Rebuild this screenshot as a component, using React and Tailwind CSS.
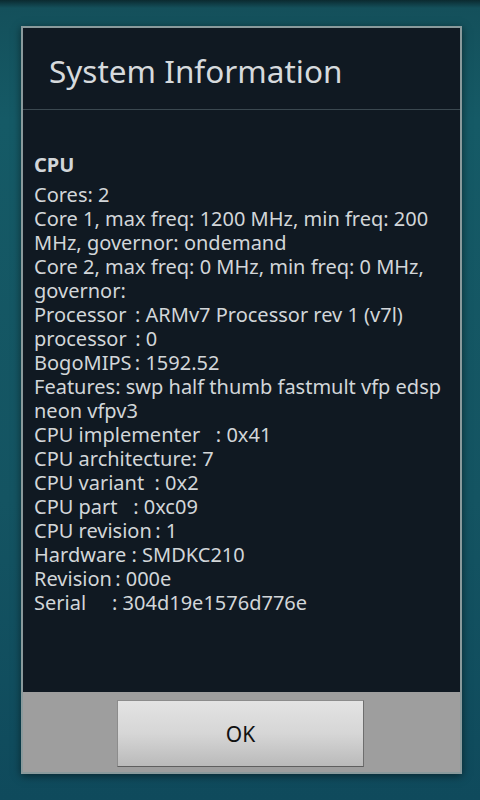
export default function App() {
  const lines = [
    "Cores: 2",
    "Core 1, max freq: 1200 MHz, min freq: 200",
    "MHz, governor: ondemand",
    "Core 2, max freq: 0 MHz, min freq: 0 MHz,",
    "governor:",
    "Processor\u00a0\u2009: ARMv7 Processor rev 1 (v7l)",
    "processor\u00a0\u2009: 0",
    "BogoMIPS\u2009: 1592.52",
    "Features: swp half thumb fastmult vfp edsp",
    "neon vfpv3",
    "CPU implementer\u00a0\u00a0\u00a0: 0x41",
    "CPU architecture: 7",
    "CPU variant\u00a0\u00a0: 0x2",
    "CPU part\u00a0\u00a0\u00a0: 0xc09",
    "CPU revision\u2009: 1",
    "Hardware\u00a0: SMDKC210",
    "Revision\u2009: 000e",
    "Serial\u00a0\u00a0\u00a0\u00a0\u00a0: 304d19e1576d776e",
  ];
  return (
    <div
      className="w-[480px] h-[800px] overflow-hidden pt-[26px] pl-[21px] bg-[linear-gradient(180deg,#0b2a30_0px,#14505b_8px,#155a66_120px,#145462_500px,#0f4a5c_800px)]"
      style={{ fontFamily: '"Noto Sans", "Open Sans", sans-serif' }}
    >
      <div className="w-[441px] h-[748px] border-2 border-[#8a9a9c] flex flex-col bg-[#101922] shadow-[0_2px_8px_rgba(0,0,0,0.5)]">
        <div className="h-[81px] shrink-0 pl-[26px] pt-[23px]">
          <div className="text-[31.5px] leading-[40px] text-[#d6dadd]">System Information</div>
        </div>
        <div className="h-px shrink-0 bg-[#3b4850]" />
        <div className="flex-1 pl-[11px] pt-[43px] text-[20px] leading-[24px] text-[#d2d6d9] whitespace-pre">
          <div className="font-bold mb-[6px]">CPU</div>
          {lines.map((l, i) => (
            <div key={i}>{l}</div>
          ))}
        </div>
        <div className="h-[80px] shrink-0 bg-[#9e9e9e] pt-[8px] pl-[94px]">
          <div className="w-[247px] h-[67px] flex items-center justify-center pt-[3px] bg-[linear-gradient(180deg,#e3e3e3,#d6d6d6_50%,#bababa)] border border-[#8c8c8c] border-b-[#5e5e5e] border-r-[#6e6e6e] text-[21px] text-[#111]">
            OK
          </div>
        </div>
      </div>
    </div>
  );
}
